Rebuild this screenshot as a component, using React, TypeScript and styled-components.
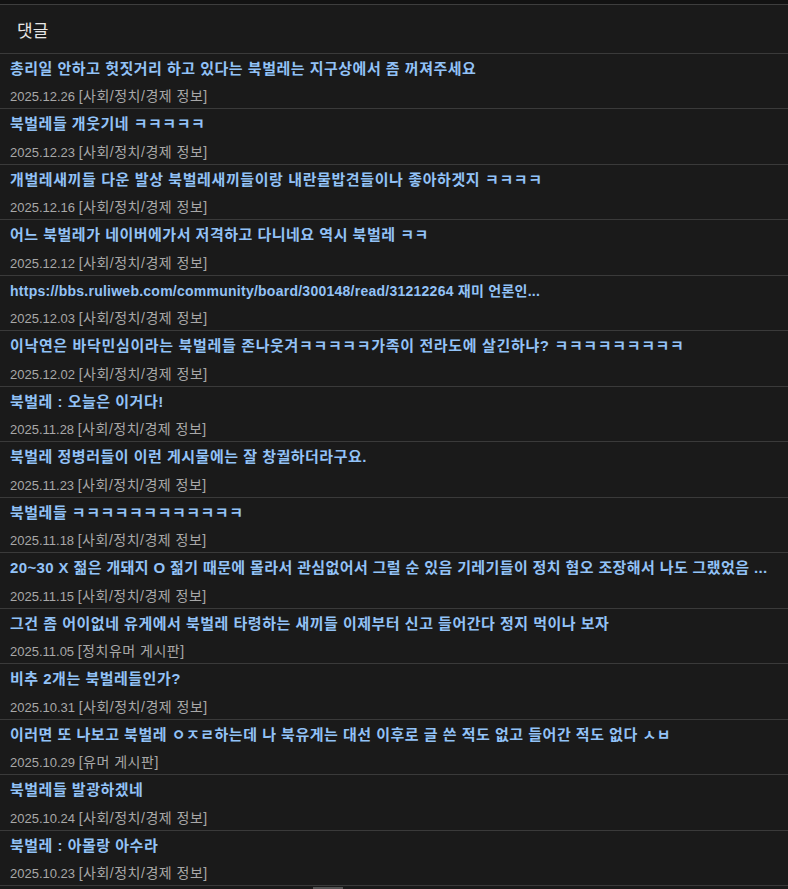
import React from "react";
import styled, { createGlobalStyle } from "styled-components";

const Global = createGlobalStyle`
  html, body { margin: 0; padding: 0; background: #121212; }
  body { font-family: "Liberation Sans", "Noto Sans CJK KR", sans-serif; }
`;

const Panel = styled.section`
  margin-top: 4px;
  border-top: 1px solid #3e3e3e;
  background: #1a1a1a;
  min-height: 884px;
  position: relative;
`;

const Header = styled.h2`
  margin: 0;
  height: 48px;
  display: flex;
  align-items: center;
  padding-left: 17px;
  font-family: "Noto Sans CJK KR", sans-serif;
  font-weight: 400;
  font-size: 17px;
  color: #e6e6e6;
  border-bottom: 1px solid #3a3a3a;
`;

const List = styled.ul`
  list-style: none;
  margin: 0;
  padding: 0;
`;

const Row = styled.li`
  height: 54.47px;
  border-bottom: 1px solid #3a3a3a;
  padding: 0 10px;
  display: flex;
  flex-direction: column;
  box-sizing: content-box;
`;

const Title = styled.a<{ $size: number; $ls: number }>`
  display: block;
  height: 28px;
  line-height: 30px;
  font-family: "Liberation Sans", "Noto Sans CJK KR", sans-serif;
  font-weight: 700;
  font-size: ${(p) => p.$size}px;
  letter-spacing: ${(p) => p.$ls}px;
  color: #92c2f7;
  text-decoration: none;
  white-space: nowrap;
  overflow: hidden;
`;

const Meta = styled.div`
  height: 27px;
  line-height: 30px;
  font-size: 13px;
  color: #a8a8a8;
  white-space: nowrap;
`;

const Category = styled.span`
  font-size: 14px;
  letter-spacing: 0.5px;
`;

const Handle = styled.div`
  position: absolute;
  left: 313px;
  bottom: 0;
  width: 30px;
  height: 2px;
  background: #555;
`;

type Item = { t: string; d: string; c: string; size?: number; ls?: number };

const SPJ = "[사회/정치/경제 정보]";

const items: Item[] = [
  { t: "총리일 안하고 헛짓거리 하고 있다는 북벌레는 지구상에서 좀 꺼져주세요", d: "2025.12.26", c: SPJ },
  { t: "북벌레들 개웃기네 ㅋㅋㅋㅋㅋ", d: "2025.12.23", c: SPJ },
  { t: "개벌레새끼들 다운 발상 북벌레새끼들이랑 내란물밥견들이나 좋아하겟지 ㅋㅋㅋㅋ", d: "2025.12.16", c: SPJ, ls: 0.6 },
  { t: "어느 북벌레가 네이버에가서 저격하고 다니네요 역시 북벌레 ㅋㅋ", d: "2025.12.12", c: SPJ },
  { t: "https://bbs.ruliweb.com/community/board/300148/read/31212264 재미 언론인...", d: "2025.12.03", c: SPJ, size: 14, ls: 0.25 },
  { t: "이낙연은 바닥민심이라는 북벌레들 존나웃겨ㅋㅋㅋㅋㅋ가족이 전라도에 살긴하냐? ㅋㅋㅋㅋㅋㅋㅋㅋㅋ", d: "2025.12.02", c: SPJ, ls: 0.65 },
  { t: "북벌레 : 오늘은 이거다!", d: "2025.11.28", c: SPJ },
  { t: "북벌레 정병러들이 이런 게시물에는 잘 창궐하더라구요.", d: "2025.11.23", c: SPJ },
  { t: "북벌레들 ㅋㅋㅋㅋㅋㅋㅋㅋㅋㅋㅋㅋ", d: "2025.11.18", c: SPJ },
  { t: "20~30 X 젊은 개돼지 O 젊기 때문에 몰라서 관심없어서 그럴 순 있음 기레기들이 정치 혐오 조장해서 나도 그랬었음 ...", d: "2025.11.15", c: SPJ, ls: 0.38 },
  { t: "그건 좀 어이없네 유게에서 북벌레 타령하는 새끼들 이제부터 신고 들어간다 정지 먹이나 보자", d: "2025.11.05", c: "[정치유머 게시판]" },
  { t: "비추 2개는 북벌레들인가?", d: "2025.10.31", c: SPJ },
  { t: "이러면 또 나보고 북벌레 ㅇㅈㄹ하는데 나 북유게는 대선 이후로 글 쓴 적도 없고 들어간 적도 없다 ㅅㅂ", d: "2025.10.29", c: "[유머 게시판]" },
  { t: "북벌레들 발광하겠네", d: "2025.10.24", c: SPJ },
  { t: "북벌레 : 아몰랑 아수라", d: "2025.10.23", c: SPJ },
];

export default function App() {
  return (
    <>
      <Global />
      <Panel>
        <Header>댓글</Header>
        <List>
          {items.map((it, i) => (
            <Row key={i}>
              <Title href="#" $size={it.size ?? 15} $ls={it.ls ?? 0.5}>
                {it.t}
              </Title>
              <Meta>
                {it.d} <Category>{it.c}</Category>
              </Meta>
            </Row>
          ))}
        </List>
        <Handle />
      </Panel>
    </>
  );
}
